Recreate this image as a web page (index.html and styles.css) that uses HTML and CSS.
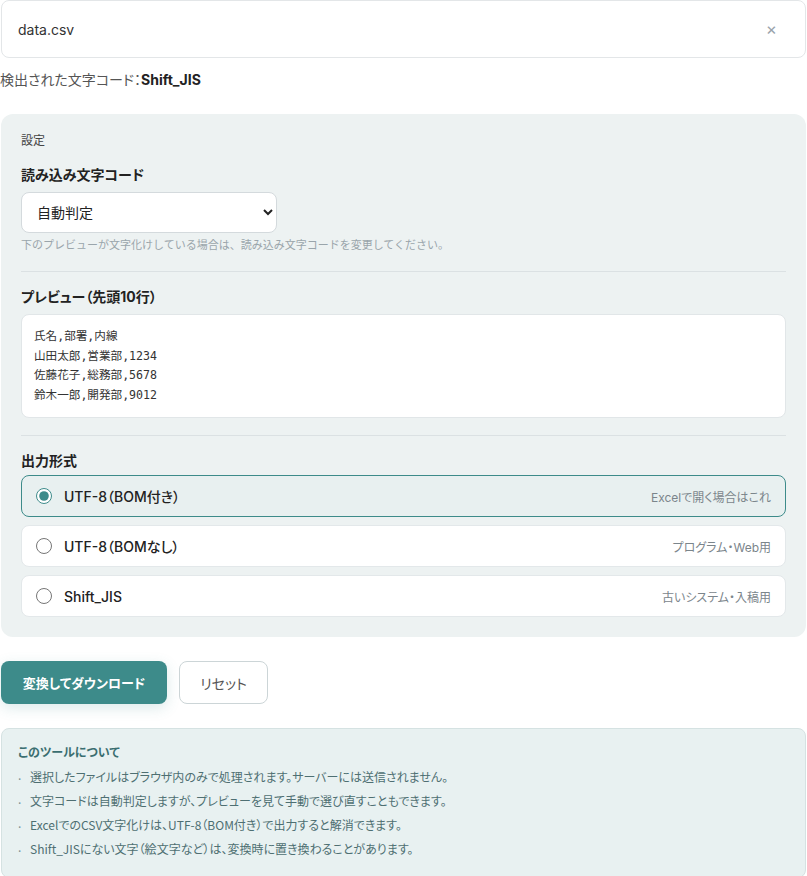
FILE: index.html
```html
<!DOCTYPE html>
<html lang="ja">
<head>
<meta charset="utf-8">
<title>CSV文字コード変換</title>
<link rel="stylesheet" href="styles.css">
</head>
<body>
<div class="page">
  <div class="file-box">
    <span class="file-name">data.csv</span>
    <span class="file-close">×</span>
  </div>
  <p class="detected">検出された文字コード：<strong>Shift_JIS</strong></p>

  <section class="panel">
    <div class="panel-label">設定</div>
    <h3 class="field-title">読み込み文字コード</h3>
    <select class="encoding-select">
      <option>自動判定</option>
      <option>UTF-8</option>
      <option>Shift_JIS</option>
      <option>EUC-JP</option>
    </select>
    <p class="hint">下のプレビューが文字化けしている場合は、読み込み文字コードを変更してください。</p>
    <hr class="divider">
    <h3 class="field-title">プレビュー（先頭10行）</h3>
    <pre class="preview">氏名,部署,内線
山田太郎,営業部,1234
佐藤花子,総務部,5678
鈴木一郎,開発部,9012</pre>
    <hr class="divider divider-2">
    <h3 class="field-title">出力形式</h3>
    <div class="options">
      <label class="option selected">
        <input type="radio" name="fmt" checked>
        <span class="option-name">UTF-8（BOM付き）</span>
        <span class="option-note">Excelで開く場合はこれ</span>
      </label>
      <label class="option">
        <input type="radio" name="fmt">
        <span class="option-name">UTF-8（BOMなし）</span>
        <span class="option-note">プログラム・Web用</span>
      </label>
      <label class="option">
        <input type="radio" name="fmt">
        <span class="option-name">Shift_JIS</span>
        <span class="option-note">古いシステム・入稿用</span>
      </label>
    </div>
  </section>

  <div class="actions">
    <button class="btn-primary">変換してダウンロード</button>
    <button class="btn-secondary">リセット</button>
  </div>

  <section class="info">
    <h4 class="info-title">このツールについて</h4>
    <ul class="info-list">
      <li>選択したファイルはブラウザ内のみで処理されます。サーバーには送信されません。</li>
      <li>文字コードは自動判定しますが、プレビューを見て手動で選び直すこともできます。</li>
      <li>ExcelでのCSV文字化けは、UTF-8（BOM付き）で出力すると解消できます。</li>
      <li>Shift_JISにない文字（絵文字など）は、変換時に置き換わることがあります。</li>
    </ul>
  </section>
</div>
</body>
</html>
```

FILE: styles.css
```css
* { box-sizing: border-box; }
html, body { margin: 0; padding: 0; background: #fff; }
body {
  font-family: Inter, "Noto Sans CJK JP", sans-serif;
  font-feature-settings: "palt";
  color: #333;
}
.page { width: 807px; padding: 0 1px 0 1px; }

.file-box {
  height: 58px;
  border: 1px solid #e3e6e8;
  border-radius: 8px;
  display: flex;
  align-items: center;
  justify-content: space-between;
  padding: 0 28px 0 16px;
  background: #fff;
}
.file-name { font-size: 14px; color: #333; }
.file-close { font-size: 17px; color: #9aa3ab; }

.detected {
  margin: 12px 0 0 -1px;
  height: 20px;
  line-height: 20px;
  font-size: 14px;
  color: #555;
}
.detected strong { color: #222; font-weight: 700; }

.panel {
  margin-top: 24px;
  background: #edf2f2;
  border-radius: 12px;
  padding: 18px 20px 20px 20px;
}
.panel-label { font-size: 12px; line-height: 18px; color: #444; }
.field-title {
  margin: 15px 0 0;
  font-size: 14px;
  line-height: 20px;
  font-weight: 700;
  color: #222;
}
.encoding-select {
  display: block;
  margin-top: 7px;
  width: 256px;
  height: 41px;
  border: 1px solid #d4dadd;
  border-radius: 8px;
  background: #fff;
  padding: 0 10px 0 11px;
  font-family: Inter, "Noto Sans CJK JP", sans-serif;
  font-size: 14px;
  color: #222;
}
.hint {
  margin: 4px 0 0;
  font-size: 11px;
  line-height: 16px;
  color: #9aa5ab;
  font-feature-settings: normal;
}
.divider {
  margin: 18px 0 0;
  border: 0;
  border-top: 1px solid #dbe1e3;
  height: 0;
}
.divider + .field-title { margin-top: 15px; }
.preview {
  margin: 7px 0 0;
  background: #fff;
  border: 1px solid #e1e6e8;
  border-radius: 8px;
  padding: 12px 12px 12px;
  font-family: "DejaVu Sans Mono", "Noto Sans CJK JP", monospace;
  font-feature-settings: normal;
  font-size: 11.6px;
  line-height: 19.5px;
  color: #333;
}
.divider-2 { margin-top: 17px; }

.options {
  margin-top: 4px;
  display: flex;
  flex-direction: column;
  gap: 8px;
}
.option {
  height: 42px;
  display: flex;
  align-items: center;
  background: #fff;
  border: 1px solid #e3e8ea;
  border-radius: 8px;
  padding: 0 14px 0 14px;
}
.option.selected {
  background: #e8f0f0;
  border-color: #3d8b8a;
}
.option input {
  margin: 0 12px 0 0;
  width: 16px;
  height: 16px;
  accent-color: #3d8b8a;
}
.option-name {
  font-size: 14px;
  font-weight: 500;
  color: #222;
  flex: 1;
}
.option-note { font-size: 12px; color: #7b858b; }

.actions {
  margin-top: 24px;
  display: flex;
  gap: 12px;
}
.btn-primary {
  width: 166px;
  height: 43px;
  border: 0;
  border-radius: 8px;
  background: #3d8b8a;
  color: #fff;
  font-family: Inter, "Noto Sans CJK JP", sans-serif;
  font-feature-settings: "palt";
  font-weight: 700;
  font-size: 13px;
  box-shadow: 0 4px 14px rgba(61, 139, 138, 0.18);
}
.btn-secondary {
  width: 89px;
  height: 43px;
  border: 1px solid #ccd5d7;
  border-radius: 8px;
  background: #fff;
  color: #555;
  font-family: Inter, "Noto Sans CJK JP", sans-serif;
  font-feature-settings: "palt";
  font-size: 14px;
}

.info {
  margin-top: 24px;
  background: #e8f1f1;
  border: 1px solid #d5e2e2;
  border-radius: 8px;
  padding: 15px 16px 16px;
}
.info-title {
  margin: 0;
  font-size: 12px;
  line-height: 18px;
  font-weight: 700;
  color: #3a6e70;
}
.info-list {
  list-style: none;
  margin: 3px 0 0;
  padding: 0;
}
.info-list li {
  position: relative;
  height: 24px;
  padding-left: 12px;
  font-family: "Noto Sans CJK JP", sans-serif;
  font-size: 12px;
  line-height: 24px;
  color: #4e6f72;
}
.info-list li::before {
  content: ".";
  position: absolute;
  left: 0;
  top: -2px;
  color: #7a9496;
}
```
